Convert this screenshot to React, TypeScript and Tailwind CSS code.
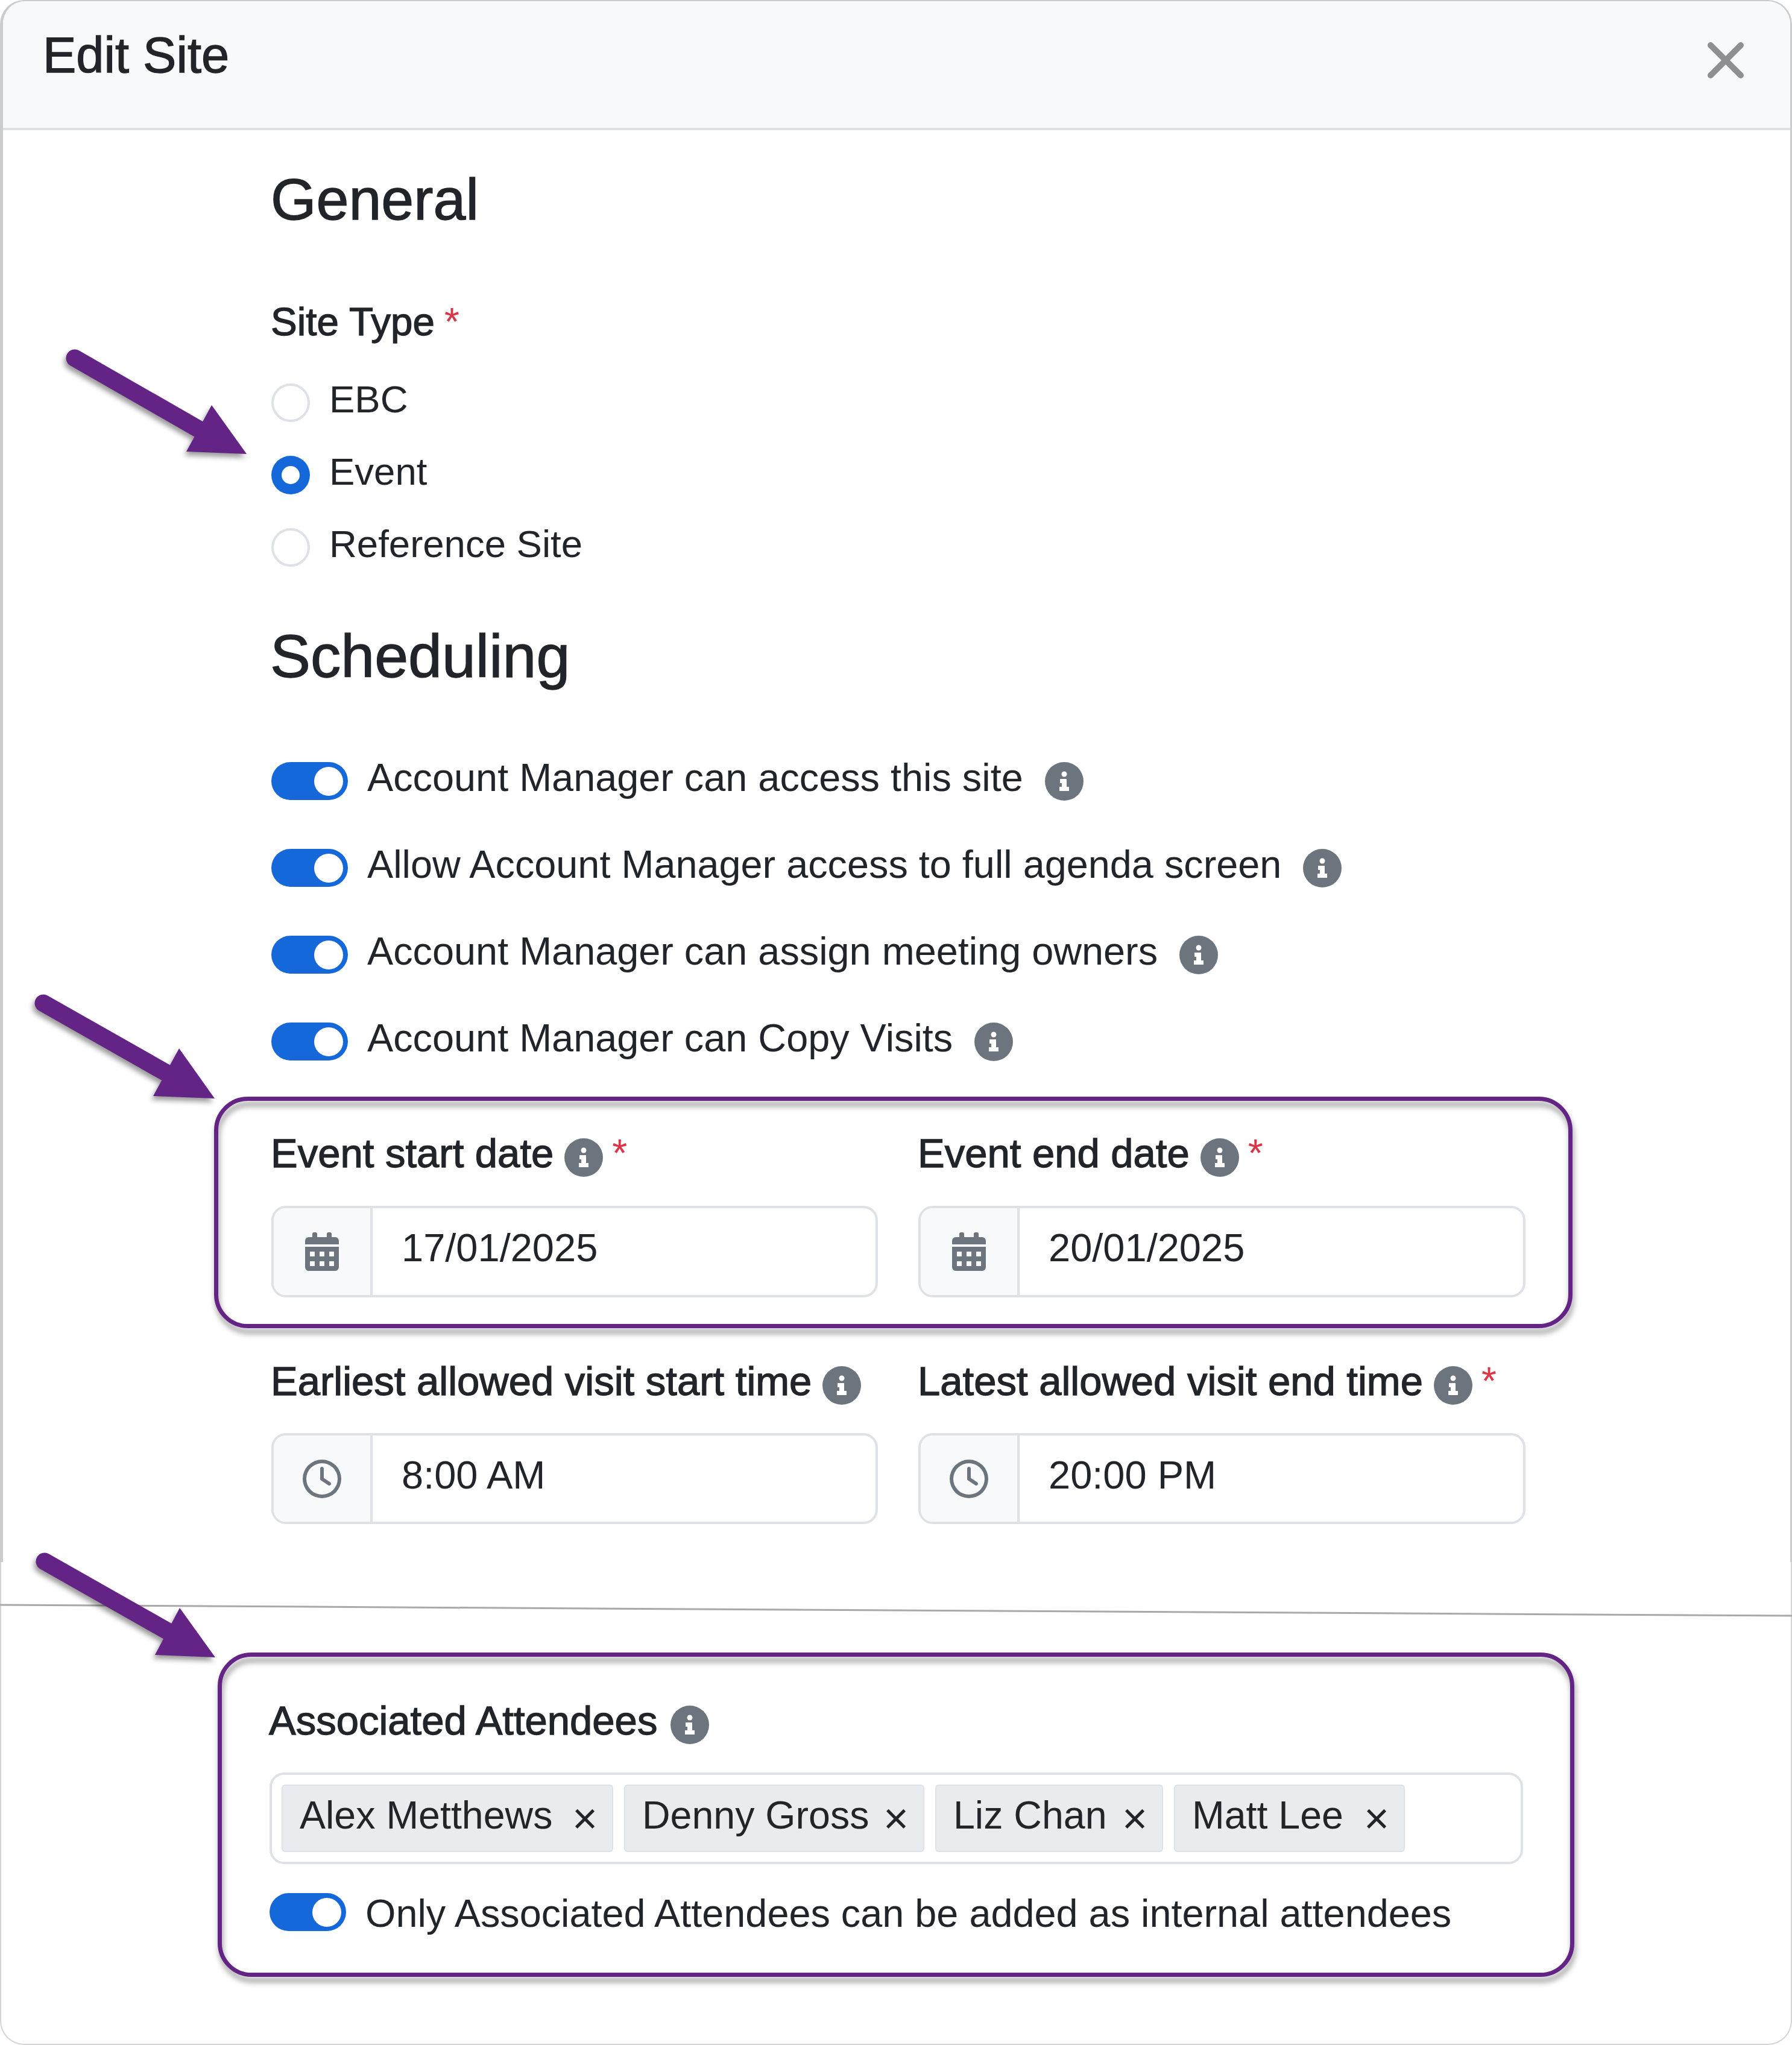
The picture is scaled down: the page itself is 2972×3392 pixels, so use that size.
import React from "react";
import { FaRegClock } from "react-icons/fa6";

const medium = "[-webkit-text-stroke:1.3px_#212529]";

const InfoIcon = ({ className = "" }: { className?: string }) => (
  <svg viewBox="0 0 64 64" className={`w-[64px] h-[64px] shrink-0 ${className}`}>
    <circle cx="32" cy="32" r="32" fill="#6c757d" />
    <circle cx="32" cy="20" r="4.5" fill="#fff" />
    <path d="M25 28 H36 V41 H40 V48 H24 V41 H28 V35 H25 Z" fill="#fff" />
  </svg>
);

const CalendarIcon = () => (
  <svg viewBox="0 0 56 64" className="w-[56px] h-[64px]">
    <path
      fillRule="evenodd"
      fill="#6c757d"
      d="M12 8 V3 a3 3 0 0 1 3 -3 h2 a3 3 0 0 1 3 3 V8 H36 V3 a3 3 0 0 1 3 -3 h2 a3 3 0 0 1 3 3 V8 H50 a6 6 0 0 1 6 6 V20 H0 V14 a6 6 0 0 1 6 -6 Z
         M0 24 H56 V58 a6 6 0 0 1 -6 6 H6 a6 6 0 0 1 -6 -6 Z
         M8 32 V40 H16 V32 Z M24 32 V40 H32 V32 Z M40 32 V40 H48 V32 Z
         M8 48 V56 H16 V48 Z M24 48 V56 H32 V48 Z M40 48 V56 H48 V48 Z"
    />
  </svg>
);

const Star = ({ className = "" }: { className?: string }) => (
  <span className={`text-[#dc3545] text-[64px] leading-[64px] ${className}`}>*</span>
);

const Radio = ({ label, checked }: { label: string; checked?: boolean }) => (
  <div className="flex h-[63px] gap-[32px]">
    {checked ? (
      <span className="w-[64px] h-[64px] rounded-full bg-[#1468da] flex items-center justify-center">
        <span className="w-[30px] h-[30px] rounded-full bg-white" />
      </span>
    ) : (
      <span className="w-[64px] h-[64px] rounded-full border-[4px] border-[#dee2e6] bg-white" />
    )}
    <span className="leading-[52px] text-[63.5px]">{label}</span>
  </div>
);

const Toggle = () => (
  <span className="w-[127px] h-[63px] shrink-0 rounded-full bg-[#1468da] flex items-center justify-end pr-[8px]">
    <span className="w-[48px] h-[48px] rounded-full bg-white" />
  </span>
);

const ToggleRow = ({ label }: { label: string }) => (
  <div className="flex h-[63px]">
    <Toggle />
    <span className="ml-[32px] mr-[36px] leading-[52px] text-[64.8px]">{label}</span>
    <InfoIcon />
  </div>
);

const FieldLabel = ({ label, required }: { label: string; required?: boolean }) => (
  <div className="flex h-[71px]">
    <span className={`leading-[64px] text-[67px] -ml-[1px] mr-[18px] ${medium}`}>{label}</span>
    <InfoIcon className="mt-[7px]" />
    {required && <Star className="ml-[15px]" />}
  </div>
);

const InputGroup = ({ value, icon, height }: { value: string; icon: React.ReactNode; height: string }) => (
  <div className={`flex border-[4px] border-[#dee2e6] rounded-[24px] overflow-hidden ${height}`}>
    <div className="w-[164px] shrink-0 bg-[#f8f9fa] border-r-[4px] border-[#dee2e6] flex items-center justify-center">
      {icon}
    </div>
    <div className="flex items-center pl-[48px] pb-[12px] leading-[64px] text-[65px]">{value}</div>
  </div>
);

const Field = ({
  label,
  required,
  value,
  icon,
  width,
  height,
  gap,
}: {
  label: string;
  required?: boolean;
  value: string;
  icon: React.ReactNode;
  width: string;
  height: string;
  gap: string;
}) => (
  <div className={width}>
    <FieldLabel label={label} required={required} />
    <div className={gap}>
      <InputGroup value={value} icon={icon} height={height} />
    </div>
  </div>
);

const Tag = ({ name, width }: { name: string; width: string }) => (
  <div className={`h-[112px] bg-[#e9ecef] border-[2px] border-[#dee2e6] rounded-[6px] flex items-center justify-between pl-[28px] pr-[24px] ${width}`}>
    <span className="leading-[64px] pb-[10px] text-[64.5px]">{name}</span>
    <span className="text-[72px] leading-[64px] text-[#212529]">×</span>
  </div>
);

const clock = <FaRegClock className="w-[64px] h-[64px] text-[#6c757d]" />;

const Arrow = ({ tail, shaftEnd, tip, top, bottom }: Record<string, number[]>) => (
  <g className="drop-shadow-[-3px_6px_4px_rgba(0,0,0,0.4)]">
    <line x1={tail[0]} y1={tail[1]} x2={shaftEnd[0]} y2={shaftEnd[1]} stroke="#642486" strokeWidth="29" strokeLinecap="round" />
    <polygon points={`${tip.join(",")} ${top.join(",")} ${bottom.join(",")}`} fill="#642486" />
  </g>
);

const Highlight = ({ className }: { className: string }) => (
  <div className={`absolute border-[7px] border-[#642486] rounded-[56px] pointer-events-none drop-shadow-[2px_9px_5px_rgba(0,0,0,0.4)] ${className}`} />
);

export default function App() {
  return (
    <div className="relative w-[2972px] h-[3392px] overflow-hidden bg-white text-[#212529] text-[64px] [font-family:'Liberation_Sans',Arial,sans-serif]">
      <div className="h-[2591px] border-l-[5px] border-r-[3px] border-t-[2px] border-[#cbcccd] rounded-t-[40px]">
        <div className="h-[214px] bg-[#f8f9fa] border-b-[4px] border-[#dee2e6] rounded-t-[38px] flex justify-between pl-[66px] pr-[77px] pt-[50px]">
          <h1 className={`text-[83px] leading-[80px] ${medium}`}>Edit Site</h1>
          <svg viewBox="0 0 60 60" className="w-[60px] h-[60px] mt-[18px]">
            <path d="M5 5 L55 55 M55 5 L5 55" stroke="#8e8f91" strokeWidth="10" strokeLinecap="round" />
          </svg>
        </div>

        <div className="pl-[445px] w-[2525px]">
          <h2 className={`text-[97px] leading-[97px] mt-[66px] -ml-[1px] ${medium}`}>General</h2>
          <div className="flex mt-[123px] leading-[64px] text-[65.5px] -ml-[1px]">
            <span className={medium}>Site Type</span>
            <Star className="ml-[16px]" />
          </div>
          <div className="flex flex-col gap-[57px] mt-[70px]">
            <Radio label="EBC" />
            <Radio label="Event" checked />
            <Radio label="Reference Site" />
          </div>

          <h2 className={`text-[100.5px] leading-[100px] mt-[99px] -ml-[2px] ${medium}`}>Scheduling</h2>
          <div className="flex flex-col gap-[81px] mt-[126px]">
            <ToggleRow label="Account Manager can access this site" />
            <ToggleRow label="Allow Account Manager access to full agenda screen" />
            <ToggleRow label="Account Manager can assign meeting owners" />
            <ToggleRow label="Account Manager can Copy Visits" />
          </div>

          <div className="relative flex justify-between mt-[122px]">
            <Highlight className="-top-[62px] -bottom-[51px] -left-[95px] -right-[78px]" />
            <Field label="Event start date" required value="17/01/2025" icon={<CalendarIcon />} width="w-[1006px]" height="h-[152px]" gap="mt-[48px]" />
            <Field label="Event end date" required value="20/01/2025" icon={<CalendarIcon />} width="w-[1007px]" height="h-[152px]" gap="mt-[48px]" />
          </div>

          <div className="flex justify-between mt-[107px]">
            <Field label="Earliest allowed visit start time" value="8:00 AM" icon={clock} width="w-[1006px]" height="h-[151px]" gap="mt-[47px]" />
            <Field label="Latest allowed visit end time" required value="20:00 PM" icon={clock} width="w-[1007px]" height="h-[151px]" gap="mt-[47px]" />
          </div>
        </div>
      </div>

      <div className="h-[801px] border-l-[2px] border-r-[2px] border-b-[2px] border-[#d4d5d6] rounded-b-[40px] pl-[445px] pt-[231px]">
        <div className="relative w-[2079px]">
          <Highlight className="-top-[81px] -bottom-[75px] -left-[86px] -right-[85px]" />
          <div className="flex h-[70px]">
            <span className={`leading-[64px] text-[67px] -ml-[1px] mr-[22px] ${medium}`}>Associated Attendees</span>
            <InfoIcon className="mt-[7px]" />
          </div>
          <div className="mt-[48px] h-[152px] border-[4px] border-[#dee2e6] rounded-[24px] flex gap-[18px] pl-[16px] pt-[16px]">
            <Tag name="Alex Metthews" width="w-[550px]" />
            <Tag name="Denny Gross" width="w-[498px]" />
            <Tag name="Liz Chan" width="w-[378px]" />
            <Tag name="Matt Lee" width="w-[383px]" />
          </div>
          <div className="flex h-[64px] mt-[48px]">
            <Toggle />
            <span className="ml-[32px] leading-[68px] text-[64.8px]">Only Associated Attendees can be added as internal attendees</span>
          </div>
        </div>
      </div>

      {/* annotations drawn over the page */}
      <svg viewBox="0 0 2972 3392" className="absolute inset-0 w-[2972px] h-[3392px] pointer-events-none">
        <line x1="0" y1="2662" x2="2972" y2="2680" stroke="#a9a9a9" strokeWidth="3" />
        <Arrow tail={[124, 594]} shaftEnd={[335, 715]} tip={[409, 753]} top={[351, 672]} bottom={[309, 749]} />
        <Arrow tail={[72, 1664]} shaftEnd={[280, 1782]} tip={[356, 1822]} top={[297, 1739]} bottom={[254, 1818]} />
        <Arrow tail={[74, 2590]} shaftEnd={[282, 2708]} tip={[357, 2749]} top={[298, 2667]} bottom={[257, 2745]} />
      </svg>
    </div>
  );
}
